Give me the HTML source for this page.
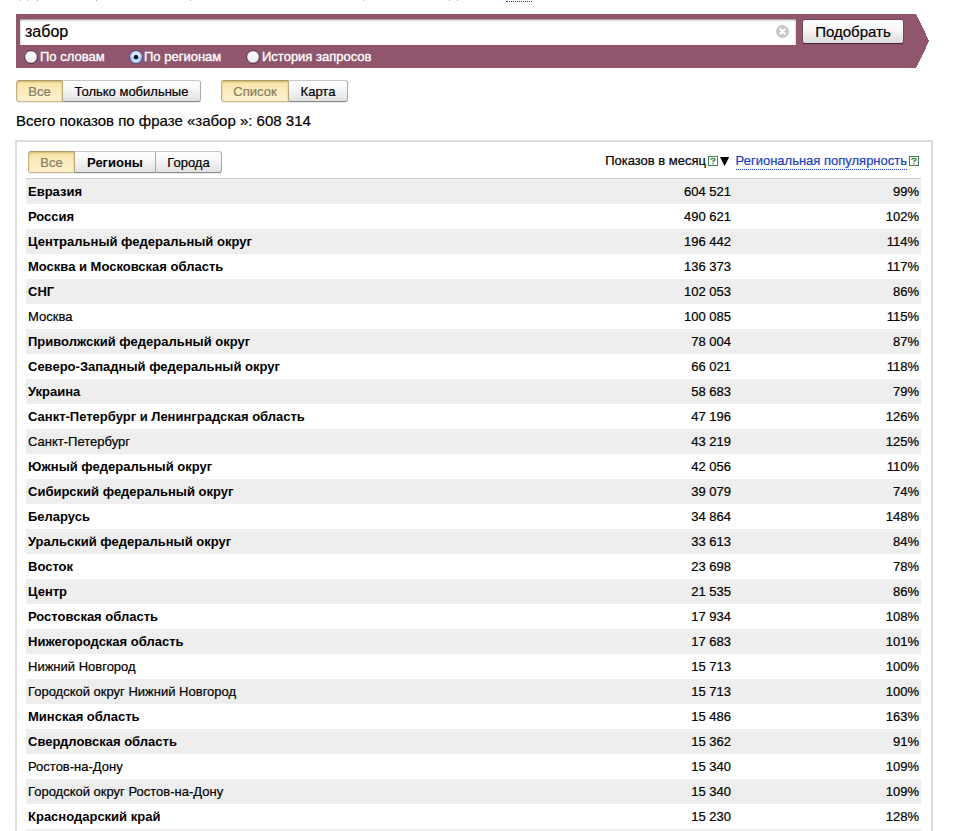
<!DOCTYPE html>
<html><head><meta charset="utf-8">
<style>
html,body{margin:0;padding:0;background:#fff;}
body{width:954px;height:831px;overflow:hidden;position:relative;font-family:"Liberation Sans",sans-serif;font-size:13px;color:#000;-webkit-text-stroke:0.2px currentColor;}
.abs{position:absolute;}
b{-webkit-text-stroke:0;}
#bar{position:absolute;left:16px;top:14px;width:900px;height:54px;background:#90566e;}
#inp{position:absolute;left:20px;top:19px;width:776px;height:26px;background:#fff;box-shadow:inset 0 1px 2px rgba(0,0,0,.45);}
#inp span{position:absolute;left:5px;top:4px;font-size:16px;line-height:18px;}
#clr{position:absolute;left:776px;top:25px;width:13px;height:13px;}
#btn{position:absolute;left:803px;top:20px;width:100px;height:23px;border-radius:2px;background:linear-gradient(#fff,#f4f4f4 50%,#dcdcdc);box-shadow:0 1px 1px rgba(0,0,0,.5),0 0 0 1px rgba(0,0,0,.15);font-size:15px;line-height:23px;text-align:center;}
.rl{position:absolute;top:49px;color:#fff;font-size:13px;line-height:15px;-webkit-text-stroke:0.35px #fff;}
.seg{position:absolute;height:22px;display:flex;font-size:13px;line-height:21px;border-radius:3px;box-shadow:0 1px 0 rgba(0,0,0,.08);}
.seg div{height:22px;text-align:center;box-sizing:border-box;background:linear-gradient(#fff,#f7f7f7 40%,#e1e1e1);border:1px solid #a9a9a9;border-top-color:#c6c6c6;border-bottom-color:#8b8b8b;border-right-width:0;}
.seg div:first-child{border-radius:3px 0 0 3px;}
.seg div:last-child{border-radius:0 3px 3px 0;border-right-width:1px;}
.seg div.on{background:linear-gradient(#f8e3a3,#fbeab8 35%,#fdf2d0);color:#857c62;border-color:#c3b382;border-top-color:#ab9a69;border-bottom-color:#cdbd8c;box-shadow:inset 0 1px 2px rgba(150,120,40,.45);}
.seg div.on + div{border-left-color:#b9a878;}
#total{position:absolute;left:16px;top:112px;font-size:15px;line-height:18px;}
#box{position:absolute;left:15px;top:140px;width:914px;height:720px;border:2px solid #dcdcdc;}
#hline{position:absolute;left:26px;top:178px;width:895px;height:1px;background:#cfcfda;}
#rows{position:absolute;left:26px;top:179px;width:895px;}
.r{position:relative;height:25px;line-height:25px;font-size:13px;}
.r.g{background:#eee;}
.r .n{position:absolute;left:2px;top:0;white-space:nowrap;}
.r .v{position:absolute;right:190px;top:0;}
.r .p{position:absolute;right:2px;top:0;}
#h1{position:absolute;top:153px;right:248px;font-size:13px;line-height:16px;white-space:nowrap;}
#h2{position:absolute;top:153px;left:735.6px;font-size:13px;line-height:16px;white-space:nowrap;color:#1a3dc1;border-bottom:1px dotted #1a3dc1;height:16px;}
</style></head><body>
<div class="abs" style="left:20px;top:0;width:1px;height:1px;background:#1a3dc1;opacity:.45"></div><div class="abs" style="left:27px;top:0;width:1px;height:1px;background:#1a3dc1;opacity:.45"></div><div class="abs" style="left:37px;top:0;width:1px;height:1px;background:#1a3dc1;opacity:.45"></div><div class="abs" style="left:96px;top:0;width:1px;height:1px;background:#1a3dc1;opacity:.45"></div><div class="abs" style="left:190px;top:0;width:1px;height:1px;background:#1a3dc1;opacity:.45"></div><div class="abs" style="left:363px;top:0;width:1px;height:1px;background:#1a3dc1;opacity:.45"></div><div class="abs" style="left:449px;top:0;width:1px;height:1px;background:#1a3dc1;opacity:.45"></div><div class="abs" style="left:457px;top:0;width:1px;height:1px;background:#1a3dc1;opacity:.45"></div><div class="abs" style="left:506px;top:1px;width:26px;height:0;border-top:1px dotted #1a3dc1"></div>
<div id="bar"></div><svg class="abs" style="left:916px;top:14px" width="14" height="54" shape-rendering="crispEdges"><path d="M0 0L13.2 27L0 54Z" fill="#90566e"/></svg>
<div id="inp"><span>забор</span></div>
<svg id="clr" viewBox="0 0 13 13"><circle cx="6.5" cy="6.5" r="6.5" fill="#c8c8c8"/><path d="M3.8 3.8L9.2 9.2M9.2 3.8L3.8 9.2" stroke="#fff" stroke-width="2.2"/></svg>
<div id="btn">Подобрать</div>
<svg class="abs" style="left:23px;top:48.8px" width="16" height="16" viewBox="0 0 16 16"><defs><linearGradient id="go31" x1="0" y1="0" x2="0" y2="1"><stop offset="0" stop-color="#fff"/><stop offset="0.5" stop-color="#f6f6f6"/><stop offset="1" stop-color="#e9e9e9"/></linearGradient></defs><circle cx="8" cy="8.4" r="6.4" fill="rgba(40,10,30,.35)"/><circle cx="8" cy="8" r="6.3" fill="url(#go31)" stroke="rgba(60,25,45,.85)" stroke-width="0.9"/></svg><div class="rl" style="left:40px">По словам</div>
<svg class="abs" style="left:128.1px;top:48.9px" width="16" height="16" viewBox="0 0 16 16"><defs><linearGradient id="gon" x1="0" y1="0" x2="0" y2="1"><stop offset="0" stop-color="#e4eef9"/><stop offset="0.5" stop-color="#c6dcf2"/><stop offset="0.52" stop-color="#9fcdf3"/><stop offset="1" stop-color="#d2ecfc"/></linearGradient></defs><circle cx="8" cy="8.4" r="6.4" fill="rgba(40,10,30,.35)"/><circle cx="8" cy="8" r="6.3" fill="url(#gon)" stroke="#3f4c9c" stroke-width="0.9"/><circle cx="8" cy="8.1" r="2.2" fill="#03060c"/></svg><div class="rl" style="left:144px">По регионам</div>
<svg class="abs" style="left:245px;top:48.8px" width="16" height="16" viewBox="0 0 16 16"><defs><linearGradient id="go253" x1="0" y1="0" x2="0" y2="1"><stop offset="0" stop-color="#fff"/><stop offset="0.5" stop-color="#f6f6f6"/><stop offset="1" stop-color="#e9e9e9"/></linearGradient></defs><circle cx="8" cy="8.4" r="6.4" fill="rgba(40,10,30,.35)"/><circle cx="8" cy="8" r="6.3" fill="url(#go253)" stroke="rgba(60,25,45,.85)" stroke-width="0.9"/></svg><div class="rl" style="left:262px">История запросов</div>

<div class="seg" style="left:16px;top:80px"><div class="on" style="width:46px">Все</div><div style="width:139px">Только мобильные</div></div>
<div class="seg" style="left:221px;top:80px"><div class="on" style="width:67px">Список</div><div style="width:60px">Карта</div></div>
<div id="total">Всего показов по фразе «забор »: 608 314</div>

<div id="box"></div>
<div class="seg" style="left:28px;top:151px"><div class="on" style="width:46px">Все</div><div style="width:81px"><b>Регионы</b></div><div style="width:67px">Города</div></div>
<div id="h1">Показов в месяц</div>
<svg class="abs" style="left:708px;top:156px" width="10" height="10" viewBox="0 0 10 10"><rect x="0.5" y="0.5" width="9" height="9" fill="#fff" stroke="#41804f"/><path d="M2.5 3.7Q3 2.3 5 2.3Q7.2 2.4 7.1 3.6Q7 4.5 5 5.2V6" fill="none" stroke="#41804f" stroke-width="1.3"/><rect x="4.3" y="6.8" width="1.4" height="1.2" fill="#41804f"/></svg>
<svg class="abs" style="left:720px;top:156px" width="11" height="10" viewBox="0 0 11 10"><path d="M0 1H9.2L4.6 10.1Z" fill="#000"/></svg>
<div id="h2">Региональная популярность</div>
<svg class="abs" style="left:909px;top:156px" width="10" height="10" viewBox="0 0 10 10"><rect x="0.5" y="0.5" width="9" height="9" fill="#fff" stroke="#41804f"/><path d="M2.5 3.7Q3 2.3 5 2.3Q7.2 2.4 7.1 3.6Q7 4.5 5 5.2V6" fill="none" stroke="#41804f" stroke-width="1.3"/><rect x="4.3" y="6.8" width="1.4" height="1.2" fill="#41804f"/></svg>
<div id="hline"></div>
<div id="rows">
<div class="r g"><span class="n"><b>Евразия</b></span><span class="v">604 521</span><span class="p">99%</span></div>
<div class="r"><span class="n"><b>Россия</b></span><span class="v">490 621</span><span class="p">102%</span></div>
<div class="r g"><span class="n"><b>Центральный федеральный округ</b></span><span class="v">196 442</span><span class="p">114%</span></div>
<div class="r"><span class="n"><b>Москва и Московская область</b></span><span class="v">136 373</span><span class="p">117%</span></div>
<div class="r g"><span class="n"><b>СНГ</b></span><span class="v">102 053</span><span class="p">86%</span></div>
<div class="r"><span class="n">Москва</span><span class="v">100 085</span><span class="p">115%</span></div>
<div class="r g"><span class="n"><b>Приволжский федеральный округ</b></span><span class="v">78 004</span><span class="p">87%</span></div>
<div class="r"><span class="n"><b>Северо-Западный федеральный округ</b></span><span class="v">66 021</span><span class="p">118%</span></div>
<div class="r g"><span class="n"><b>Украина</b></span><span class="v">58 683</span><span class="p">79%</span></div>
<div class="r"><span class="n"><b>Санкт-Петербург и Ленинградская область</b></span><span class="v">47 196</span><span class="p">126%</span></div>
<div class="r g"><span class="n">Санкт-Петербург</span><span class="v">43 219</span><span class="p">125%</span></div>
<div class="r"><span class="n"><b>Южный федеральный округ</b></span><span class="v">42 056</span><span class="p">110%</span></div>
<div class="r g"><span class="n"><b>Сибирский федеральный округ</b></span><span class="v">39 079</span><span class="p">74%</span></div>
<div class="r"><span class="n"><b>Беларусь</b></span><span class="v">34 864</span><span class="p">148%</span></div>
<div class="r g"><span class="n"><b>Уральский федеральный округ</b></span><span class="v">33 613</span><span class="p">84%</span></div>
<div class="r"><span class="n"><b>Восток</b></span><span class="v">23 698</span><span class="p">78%</span></div>
<div class="r g"><span class="n"><b>Центр</b></span><span class="v">21 535</span><span class="p">86%</span></div>
<div class="r"><span class="n"><b>Ростовская область</b></span><span class="v">17 934</span><span class="p">108%</span></div>
<div class="r g"><span class="n"><b>Нижегородская область</b></span><span class="v">17 683</span><span class="p">101%</span></div>
<div class="r"><span class="n">Нижний Новгород</span><span class="v">15 713</span><span class="p">100%</span></div>
<div class="r g"><span class="n">Городской округ Нижний Новгород</span><span class="v">15 713</span><span class="p">100%</span></div>
<div class="r"><span class="n"><b>Минская область</b></span><span class="v">15 486</span><span class="p">163%</span></div>
<div class="r g"><span class="n"><b>Свердловская область</b></span><span class="v">15 362</span><span class="p">91%</span></div>
<div class="r"><span class="n">Ростов-на-Дону</span><span class="v">15 340</span><span class="p">109%</span></div>
<div class="r g"><span class="n">Городской округ Ростов-на-Дону</span><span class="v">15 340</span><span class="p">109%</span></div>
<div class="r"><span class="n"><b>Краснодарский край</b></span><span class="v">15 230</span><span class="p">128%</span></div>
<div class="r g"><span class="n">Краснодар</span><span class="v">14 900</span><span class="p">120%</span></div>
</div>
</body></html>
